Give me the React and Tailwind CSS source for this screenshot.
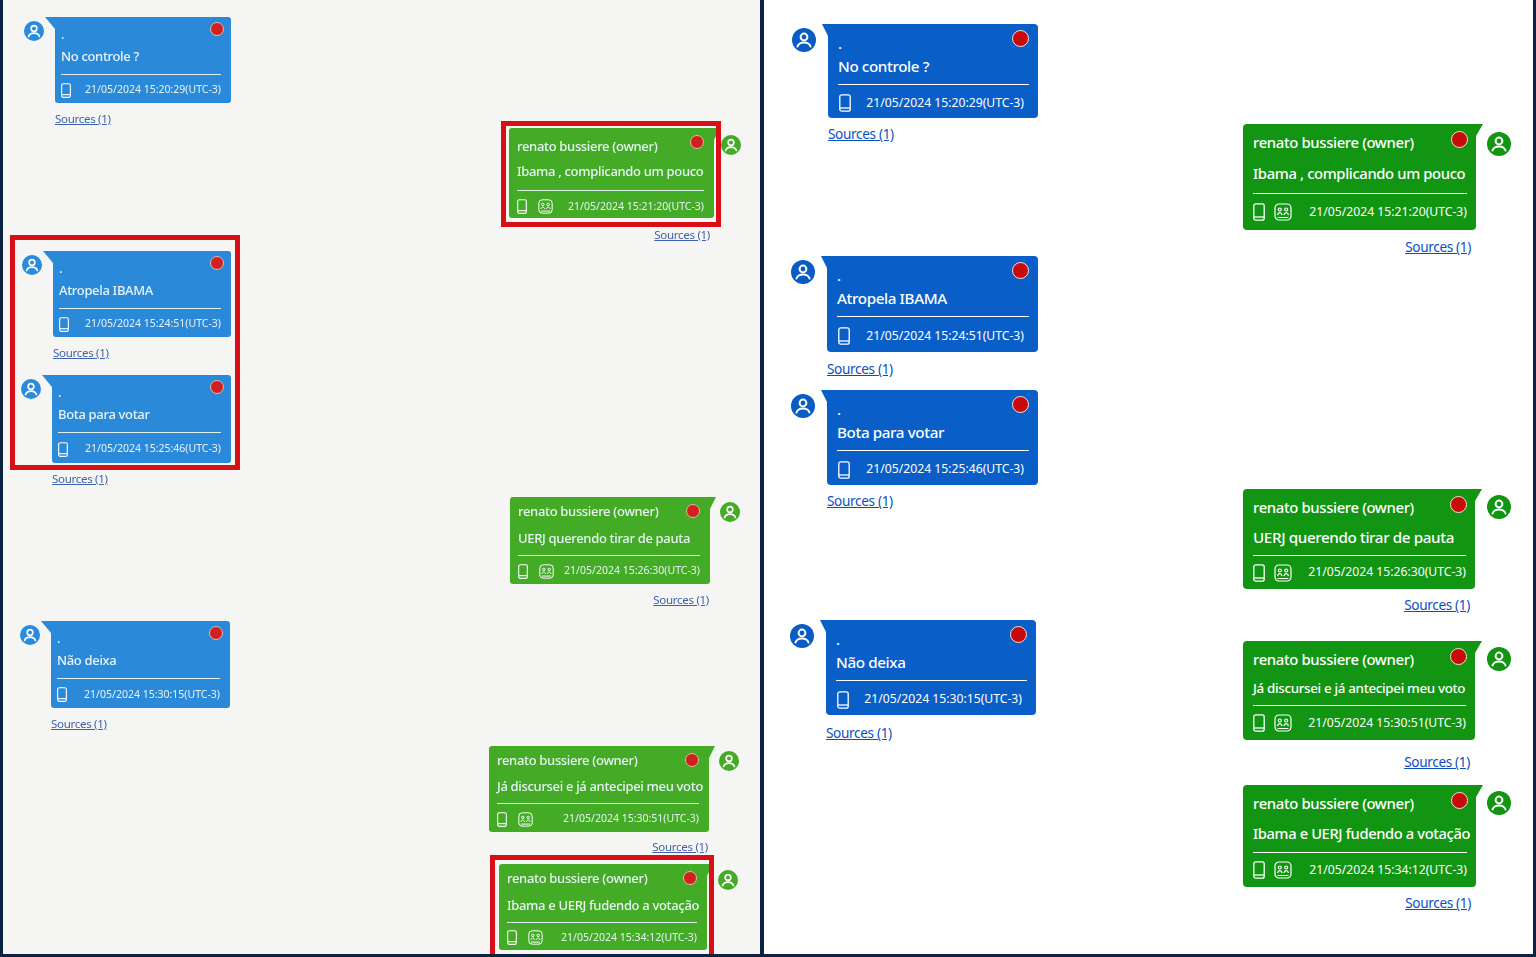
const rightRows = [
  { side: 'in', row: 'mt-[24px] pl-[28px]', w: 'w-[210px] h-[94px]', text: 'No controle ?', time: '21/05/2024 15:20:29(UTC-3)', link: 'mt-[8px]' },
  { side: 'out', row: 'mt-[-18px] pr-[22px] gap-[11px]', av: 'mt-[8px]', w: 'w-[233px] h-[106px]', msg: 'h-[27px] text-[14.800px]', text: 'Ibama , complicando um pouco', time: '21/05/2024 15:21:20(UTC-3)', link: 'mt-[9px]' },
  { side: 'in', row: 'mt-[1px] pl-[27px]', w: 'w-[211px] h-[96px]', text: 'Atropela IBAMA', time: '21/05/2024 15:24:51(UTC-3)', link: 'mt-[9px]' },
  { side: 'in', row: 'mt-[13px] pl-[27px]', w: 'w-[211px] h-[95px]', text: 'Bota para votar', time: '21/05/2024 15:25:46(UTC-3)', link: 'mt-[8px]' },
  { side: 'out', row: 'mt-[-20px] pr-[22px] gap-[12px]', av: 'mt-[6px]', w: 'w-[232px] h-[100px]', msg: 'h-[24px] text-[15.200px]', text: 'UERJ querendo tirar de pauta', time: '21/05/2024 15:26:30(UTC-3)', link: 'mt-[8px]' },
  { side: 'in', row: 'mt-[7px] pl-[26px]', w: 'w-[210px] h-[95px]', text: 'Não deixa', time: '21/05/2024 15:30:15(UTC-3)', link: 'mt-[10px]' },
  { side: 'out', row: 'mt-[-100px] pr-[22px] gap-[12px]', av: 'mt-[6px]', w: 'w-[232px] h-[99px]', msg: 'h-[22px] text-[13.400px]', text: 'Já discursei e já antecipei meu voto', time: '21/05/2024 15:30:51(UTC-3)', link: 'mt-[14px]' },
  { side: 'out', row: 'mt-[15px] pr-[22px] gap-[11px]', av: 'mt-[6px]', w: 'w-[233px] h-[102px]', msg: 'h-[25px] text-[14.700px]', text: 'Ibama e UERJ fudendo a votação', time: '21/05/2024 15:34:12(UTC-3)', link: 'mt-[8px]' },
];

const leftRows = [
  { side: 'in', row: 'mt-[17px] pl-[21px]', w: 'w-[176px] h-[86px]', text: 'No controle ?', time: '21/05/2024 15:20:29(UTC-3)', link: 'mt-[9px]' },
  { side: 'out', row: 'mt-[2px] pr-[19px] gap-[7px]', av: 'mt-[7px]', w: 'w-[205px] h-[90px]', sender: 'h-[30px] pt-[8px]', msg: 'h-[28px]', hr: 'mt-[4px]', foot: 'pt-[4px]', text: 'Ibama , complicando um pouco', time: '21/05/2024 15:21:20(UTC-3)', link: 'mt-[10px] mr-[4px]' },
  { side: 'in', row: 'mt-[9px] pl-[19px]', w: 'w-[178px] h-[86px]', text: 'Atropela IBAMA', time: '21/05/2024 15:24:51(UTC-3)', link: 'mt-[9px]' },
  { side: 'in', row: 'mt-[15px] pl-[18px]', w: 'w-[179px] h-[88px]', text: 'Bota para votar', time: '21/05/2024 15:25:46(UTC-3)', link: 'mt-[9px]' },
  { side: 'out', row: 'mt-[11px] pr-[20px] gap-[10px]', av: 'mt-[5px]', w: 'w-[200px] h-[87px]', msg: 'h-[23px]', text: 'UERJ querendo tirar de pauta', time: '21/05/2024 15:26:30(UTC-3)', link: 'mt-[9px] mr-[1px]' },
  { side: 'in', row: 'mt-[14px] pl-[17px]', w: 'w-[179px] h-[87px]', text: 'Não deixa', time: '21/05/2024 15:30:15(UTC-3)', link: 'mt-[9px]' },
  { side: 'out', row: 'mt-[15px] pr-[21px] gap-[10px]', av: 'mt-[5px]', w: 'w-[220px] h-[86px]', msg: 'h-[22px]', text: 'Já discursei e já antecipei meu voto', time: '21/05/2024 15:30:51(UTC-3)', link: 'mt-[8px] mr-[1px]' },
  { side: 'out', row: 'mt-[10px] pr-[22px] gap-[11px]', av: 'mt-[6px]', w: 'w-[208px] h-[86px]', msg: 'h-[23px]', text: 'Ibama e UERJ fudendo a votação', time: '21/05/2024 15:34:12(UTC-3)' },
];

function Avatar({ className }) {
  return (
    <div className={`shrink-0 rounded-full flex items-center justify-center ${className}`}>
      <svg viewBox="0 0 24 24" className="w-full h-full" fill="none" stroke="white" strokeWidth="2">
        <circle cx="12" cy="9" r="3.4" />
        <path d="M5.5 18.5c1-3 3.5-4 6.5-4s5.500 1 6.500 4" strokeLinecap="round" />
      </svg>
    </div>
  );
}

function PhoneIcon({ className }) {
  return (
    <svg viewBox="0 0 12 18" className={className} fill="none" stroke="white" strokeWidth="1.3">
      <rect x="0.8" y="0.8" width="10.400" height="16.400" rx="2" />
      <path d="M1 14h10" />
    </svg>
  );
}

function ChatIcon({ className }) {
  return (
    <svg viewBox="0 0 18 18" className={className} fill="none" stroke="white" strokeWidth="1.200">
      <rect x="1" y="1" width="16" height="16" rx="4" />
      <circle cx="5.800" cy="6.500" r="1.500" />
      <circle cx="12.200" cy="6.500" r="1.500" />
      <path d="M3.500 12c.4-1.500 1.200-2.300 2.300-2.300s1.900.8 2.300 2.300M9.900 12c.4-1.500 1.200-2.300 2.300-2.300s1.900.8 2.300 2.300M3.500 14.500h11" />
    </svg>
  );
}

function Tail({ side, className }) {
  return (
    <svg viewBox="0 0 10 12" preserveAspectRatio="none" className={`absolute top-0 ${className}`}>
      <polygon points={side === 'in' ? '0,0 10,0 10,12' : '0,0 10,0 0,12'} fill="currentColor" />
    </svg>
  );
}

function RightMessage({ m }) {
  const isIn = m.side === 'in';
  return (
    <div className={`flex ${isIn ? 'justify-start gap-[12px]' : 'justify-end'} ${m.row}`}>
      {isIn && <Avatar className="w-[24px] h-[24px] mt-[4px] bg-[#0a5cc4]" />}
      <div className={`flex flex-col ${isIn ? 'items-start' : 'items-end'}`}>
        <div className={`relative rounded-[4px] flex flex-col text-white ${m.w} ${isIn ? 'bg-[#0a5ec8] rounded-tl-none pl-[10px] pr-[9px]' : 'bg-[#119512] rounded-tr-none pl-[10px] pr-[9px]'}`}>
          <Tail side={m.side} className={isIn ? 'left-[-6px] w-[6px] h-[12px] text-[#0a5ec8]' : 'right-[-7px] w-[7px] h-[12px] text-[#119512]'} />
          <div className={`flex items-center text-[14.900px] tracking-[-0.025em] font-medium shrink-0 ${isIn ? 'h-[30px] pt-[8px]' : 'h-[36px]'}`}>
            {isIn ? '.' : 'renato bussiere (owner)'}
          </div>
          <div className={`flex items-center font-medium tracking-[-0.025em] shrink-0 whitespace-nowrap ${isIn ? 'h-[24px] text-[15.200px]' : m.msg}`}>{m.text}</div>
          <div className="h-px bg-white mt-[6px] shrink-0" />
          <div className={`flex-1 flex items-center ${isIn ? 'pl-[1px] pt-[3px] pr-[5px]' : ''}`}>
            <PhoneIcon className="w-[12px] h-[18px] shrink-0" />
            {!isIn && <ChatIcon className="w-[18px] h-[18px] ml-[9px] shrink-0" />}
            <span className="ml-auto text-[12.200px] whitespace-nowrap">{m.time}</span>
          </div>
          <div className={`absolute w-[17px] h-[17px] rounded-full bg-[#c70a0a] border border-[#f3e3d0] ${isIn ? 'top-[6px] right-[9px]' : 'top-[7px] right-[8px]'}`} />
        </div>
        <a className={`h-[16px] leading-[16px] text-[13.600px] tracking-[-0.025em] text-[#0b4fbf] underline ${isIn ? '' : 'mr-[5px]'} ${m.link}`}>Sources (1)</a>
      </div>
      {!isIn && <Avatar className={`w-[24px] h-[24px] bg-[#119512] ${m.av}`} />}
    </div>
  );
}

function LeftMessage({ m }) {
  const isIn = m.side === 'in';
  return (
    <div className={`flex ${isIn ? 'justify-start gap-[11px]' : 'justify-end'} ${m.row}`}>
      {isIn && <Avatar className="w-[20px] h-[20px] mt-[4px] bg-[#2a8adb]" />}
      <div className={`flex flex-col ${isIn ? 'items-start' : 'items-end'}`}>
        <div className={`relative rounded-[3px] flex flex-col text-[#e8f3f5] ${m.w} ${isIn ? 'bg-[#2a8ad9] rounded-tl-none pl-[6px] pr-[10px]' : 'bg-[#43ab26] rounded-tr-none pl-[8px] pr-[10px]'}`}>
          <Tail side={m.side} className={isIn ? 'left-[-10px] w-[10px] h-[12px] text-[#2a8ad9]' : 'right-[-6px] w-[6px] h-[12px] text-[#43ab26]'} />
          <div className={`flex items-center text-[13px] tracking-[-0.025em] font-medium shrink-0 ${isIn ? 'h-[28px] pt-[7px]' : m.sender || 'h-[30px]'}`}>
            {isIn ? '.' : 'renato bussiere (owner)'}
          </div>
          <div className={`flex items-center text-[13px] tracking-[-0.025em] font-medium shrink-0 whitespace-nowrap ${isIn ? 'h-[24px]' : m.msg}`}>{m.text}</div>
          <div className={`h-px bg-[#dfeee8] shrink-0 ${m.hr || 'mt-[5px]'}`} />
          <div className={`flex-1 flex items-center ${m.foot || 'pt-[2px]'}`}>
            <PhoneIcon className="w-[10px] h-[15px] shrink-0" />
            {!isIn && <ChatIcon className="w-[15px] h-[15px] ml-[11px] shrink-0" />}
            <span className="ml-auto text-[10.500px] whitespace-nowrap">{m.time}</span>
          </div>
          <div className={`absolute w-[14px] h-[14px] rounded-full bg-[#d02020] border border-[#e6b8a8] ${isIn ? 'top-[5px] right-[7px]' : 'top-[7px] right-[10px]'}`} />
        </div>
        {m.link && <a className={`h-[14px] leading-[14px] text-[11.500px] tracking-[-0.025em] text-[#3f63ab] underline ${m.link}`}>Sources (1)</a>}
      </div>
      {!isIn && <Avatar className={`w-[20px] h-[20px] bg-[#43ab26] ${m.av}`} />}
    </div>
  );
}

export default function App() {
  return (
    <div className="w-[1536px] h-[957px] overflow-hidden bg-[#0b2244] pl-[3px] pr-[3px] pb-[3px] flex gap-[4px] font-['Noto_Sans','Open_Sans',sans-serif]">
      <div className="relative w-[757px] h-full overflow-hidden bg-[#f5f5f4] blur-[0.6px]">
        {leftRows.map((m) => <LeftMessage key={m.time} m={m} />)}
        <div className="absolute left-[498px] top-[121px] w-[220px] h-[106px] border-[5px] border-[#d80f17]" />
        <div className="absolute left-[7px] top-[235px] w-[230px] h-[235px] border-[5px] border-[#d80f17]" />
        <div className="absolute left-[487px] top-[855px] w-[224px] h-[120px] border-[5px] border-[#d80f17]" />
      </div>
      <div className="relative w-[769px] h-full overflow-hidden bg-white">
        {rightRows.map((m) => <RightMessage key={m.time} m={m} />)}
      </div>
    </div>
  );
}
